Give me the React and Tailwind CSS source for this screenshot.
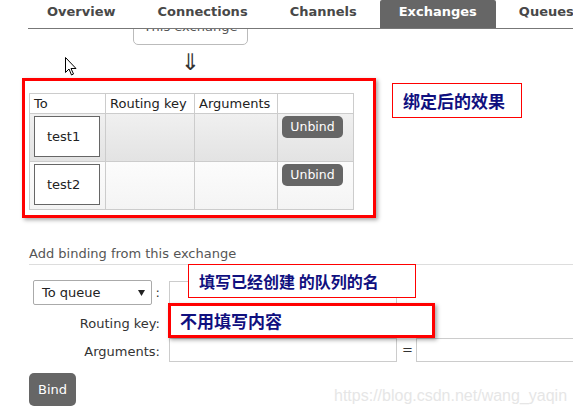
const tabs = ['Overview', 'Connections', 'Channels', 'Exchanges', 'Queues'];

const bindings = [
  { name: 'test1', bg: 'bg-gradient-to-b from-[#f0f0f0] to-[#e3e3e3]' },
  { name: 'test2', bg: 'bg-gradient-to-b from-[#fcfcfc] to-[#f4f4f4]' },
];

const note = "font-['Noto_Sans_CJK_SC',sans-serif] font-bold text-[#10107f]";

function Cursor() {
  return (
    <svg width="12" height="19" viewBox="0 0 12 19" className="absolute left-[65px] top-[57px]">
      <path d="M0.5 0.5 L0.5 15.5 L4 12 L6.5 18 L8.5 17 L6 11.5 L11 11.5 Z" fill="#fff" stroke="#000" strokeWidth="1" />
    </svg>
  );
}

export default function App() {
  return (
    <div className="relative w-[573px] h-[413px] overflow-hidden bg-white text-[#333] font-['DejaVu_Sans',sans-serif] text-[13px] leading-[16px]">
      {/* tab bar */}
      <div className="ml-[28px] flex border-b border-[#777] whitespace-nowrap">
        {tabs.map((t, i) => (
          <div
            key={t}
            className={`shrink-0 h-[28px] pt-[4px] font-bold ${i === 0 ? 'pl-[19px] pr-[21px]' : t === 'Exchanges' ? 'px-[19px] ml-[2px] mr-[2px]' : 'px-[21px]'} ${
              t === 'Exchanges' ? 'bg-[#666] text-white rounded-t-[2px]' : 'text-[#484848]'
            }`}
          >
            {t}
          </div>
        ))}
      </div>

      {/* this exchange box, cut off by the tabs */}
      <div className="ml-[133px] w-[115px] h-[16px] overflow-hidden">
        <div className="-mt-[19px] w-full border border-[#bbb] rounded-b-[5px] pt-[8px] pb-[9px] text-center text-[#555] whitespace-nowrap">This exchange</div>
      </div>
      <div className="ml-[133px] w-[115px] h-[33px] flex justify-center pt-[5px] text-[#333] text-[23px] leading-[24px]">⇓</div>

      {/* bindings + note */}
      <div className="flex items-start">
        <div className="shrink-0 ml-[22px] w-[354px] h-[140px] border-[3px] border-[#ff0000] pt-[12px] pl-[4px] shadow-[2px_2px_4px_rgba(0,0,0,0.35)]">
          <div className="grid grid-cols-[76px_89px_83px_76px] border-t border-l border-[#ccc] w-[325px] text-[#222]">
            {['To', 'Routing key', 'Arguments', ''].map((h, i) => (
              <div key={i} className="h-[20px] border-r border-b border-[#ccc] pt-[2px] px-[4px] whitespace-nowrap">{h}</div>
            ))}
            {bindings.map((b) => [
              <div key={b.name + 'a'} className={`h-[48px] border-r border-b border-[#ccc] pt-[2px] pl-[4px] ${b.bg}`}>
                <div className="w-[66px] h-[41px] border border-[#666] bg-white flex items-center pl-[12px]">{b.name}</div>
              </div>,
              <div key={b.name + 'b'} className={`h-[48px] border-r border-b border-[#ccc] ${b.bg}`} />,
              <div key={b.name + 'c'} className={`h-[48px] border-r border-b border-[#ccc] ${b.bg}`} />,
              <div key={b.name + 'd'} className={`h-[48px] border-r border-b border-[#ccc] pt-[2px] pl-[4px] ${b.bg}`}>
                <div className="w-[61px] h-[22px] rounded-[5px] bg-[#666] text-white text-[12.5px] flex items-center justify-center">Unbind</div>
              </div>,
            ])}
          </div>
        </div>
        <div className={`shrink-0 ml-[16px] mt-[5px] w-[130px] h-[35px] border border-[#ff0000] flex items-center pl-[10px] text-[17px] ${note}`}>
          绑定后的效果
        </div>
      </div>

      {/* add binding form */}
      <div className="ml-[29px] mt-[28px] pb-[2px] border-b border-[#ddd] text-[#555]">Add binding from this exchange</div>

      <div className="ml-[29px] mt-[15px]">
        <div className="flex items-start h-[25px]">
          <div className="shrink-0 w-[131px] flex items-center">
            <div className="ml-[4px] w-[120px] h-[25px] border border-[#aaa] rounded-[2px] flex items-center justify-between pl-[8px] pr-[6px] text-[#222]">
              <span>To queue</span>
              <svg width="7" height="6" viewBox="0 0 7 6">
                <path d="M0 0 H7 L3.5 6 Z" fill="#222" />
              </svg>
            </div>
            <span className="ml-[4px]">:</span>
          </div>
          <div className="shrink-0 ml-[9px] mt-[1px] w-[228px] h-[24px] border border-[#ccc]" />
        </div>
        <div className="flex items-start mt-[4px]">
          <div className="shrink-0 w-[131px] text-right pt-[7px]">Routing key:</div>
          <div className="shrink-0 ml-[9px] w-[228px] h-[24px] border border-[#ccc]" />
        </div>
        <div className="flex items-start mt-[5px]">
          <div className="shrink-0 w-[131px] text-right pt-[6px]">Arguments:</div>
          <div className="shrink-0 ml-[9px] w-[228px] h-[24px] border border-[#ccc]" />
          <span className="shrink-0 ml-[5px] pt-[4px]">=</span>
          <div className="shrink-0 ml-[3px] w-[200px] h-[24px] border border-[#ccc]" />
        </div>
        <div className="mt-[11px] w-[47px] h-[33px] rounded-[5px] bg-[#666] text-white flex items-center justify-center">Bind</div>
      </div>

      {/* annotations laid over the form */}
      <div className={`absolute left-[188px] top-[264px] w-[228px] h-[34px] border border-[#ff0000] bg-white flex items-center pl-[10px] text-[16px] whitespace-nowrap ${note}`}>
        填写已经创建 的队列的名
      </div>
      <div className={`absolute left-[168px] top-[303px] w-[267px] h-[35px] border-[3px] border-[#ff0000] bg-white flex items-center pl-[9px] text-[17px] shadow-[2px_2px_4px_rgba(0,0,0,0.35)] ${note}`}>
        不用填写内容
      </div>

      <Cursor />

      <div className="absolute left-[334px] top-[388px] font-['Liberation_Sans',sans-serif] text-[16px] leading-none text-[#e6e6e6] whitespace-nowrap">
        https://blog.csdn.net/wang_yaqin
      </div>
    </div>
  );
}
